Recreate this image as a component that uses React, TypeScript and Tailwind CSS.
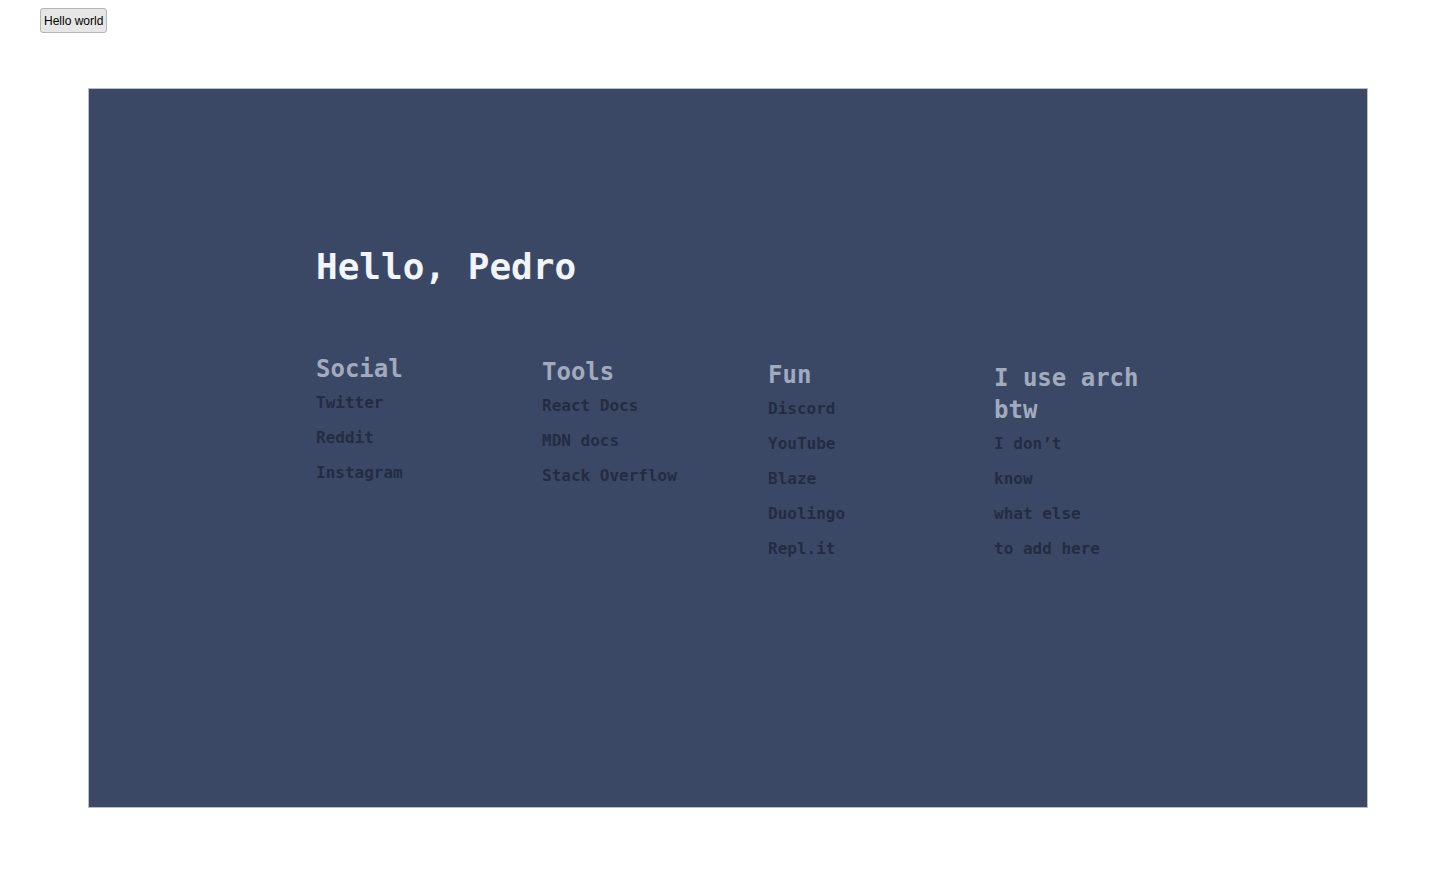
const columns = [
  { title: "Social", offset: "mt-0", links: ["Twitter", "Reddit", "Instagram"] },
  { title: "Tools", offset: "mt-[3px]", links: ["React Docs", "MDN docs", "Stack Overflow"] },
  { title: "Fun", offset: "mt-[6px]", links: ["Discord", "YouTube", "Blaze", "Duolingo", "Repl.it"] },
  { title: "I use arch btw", offset: "mt-[9px]", links: ["I don’t", "know", "what else", "to add here"] },
]

function Column({ title, offset, links }: { title: string; offset: string; links: string[] }) {
  return (
    <div className={`w-[180px] ${offset}`}>
      <h2 className="text-[24px] leading-[32px] font-semibold text-[#a1abbf]">{title}</h2>
      <ul className="mt-[8px] flex flex-col gap-[15px]">
        {links.map((l) => (
          <li key={l} className="leading-[20px]">
            <a href="#" className="text-[16px] leading-[20px] font-semibold text-[#232c42]">
              {l}
            </a>
          </li>
        ))}
      </ul>
    </div>
  )
}

export default function App() {
  return (
    <div className="min-h-screen bg-white pb-[89px]">
      <button className="ml-10 mt-2 h-[25px] rounded-[3px] border border-[#b5b5b5] bg-[#e6e6e6] px-[3px] text-[12px] text-black [font-family:'Liberation_Sans',Arial,sans-serif]">
        Hello world
      </button>
      <div className="mx-auto mt-[55px] h-[720px] w-[1280px] border border-[#b9bec8] bg-[#3a4866] pl-[227px] pt-[158px] [font-family:'DejaVu_Sans_Mono','Liberation_Mono',monospace]">
        <h1 className="text-[36px] leading-[40px] font-bold text-[#f1f4f9]">Hello, Pedro</h1>
        <div className="mt-[66px] flex items-start gap-[46px]">
          {columns.map((c) => (
            <Column key={c.title} {...c} />
          ))}
        </div>
      </div>
    </div>
  )
}
